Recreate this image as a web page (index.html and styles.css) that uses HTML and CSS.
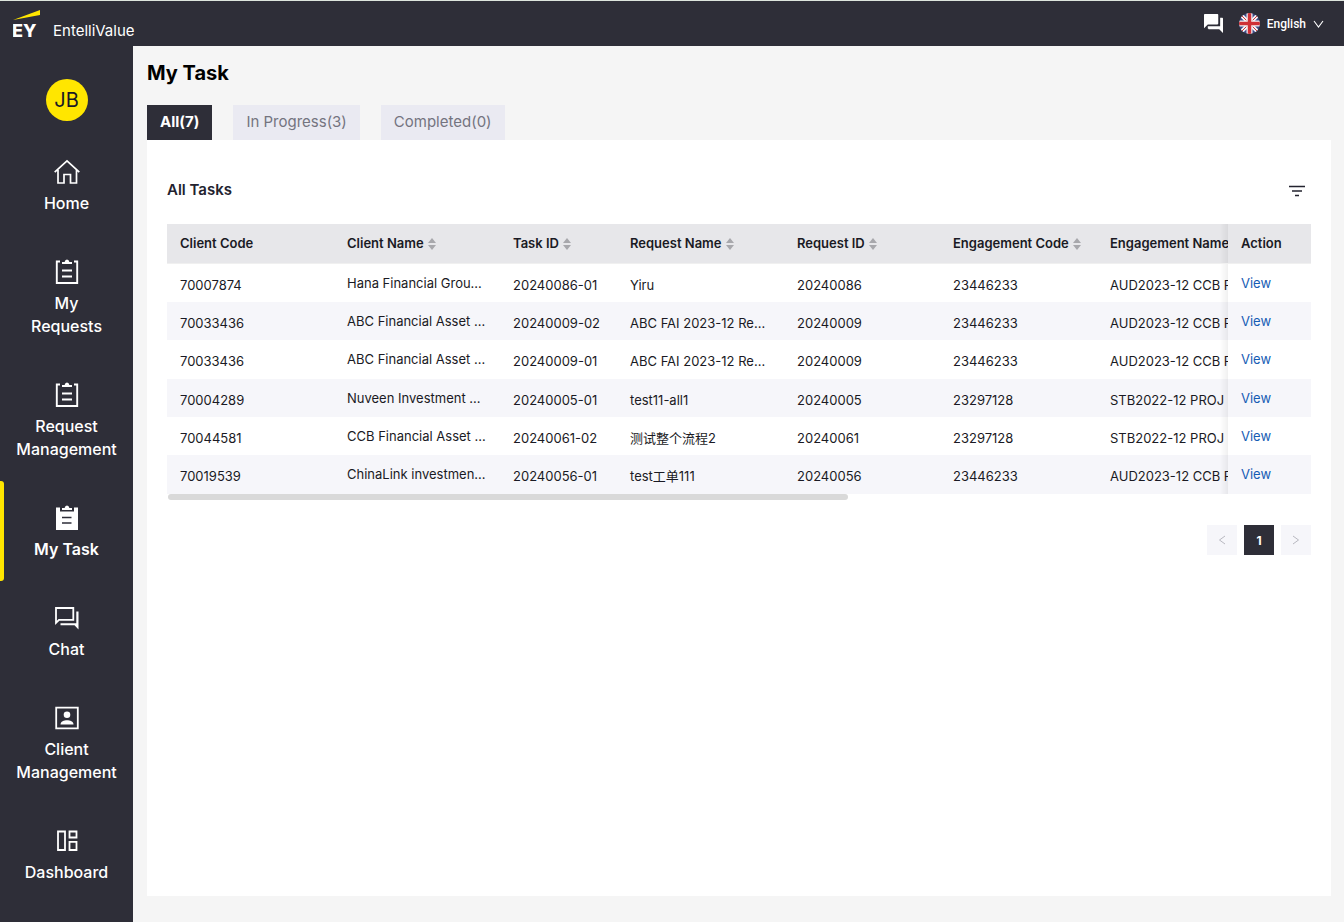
FILE: index.html
```html
<!DOCTYPE html>
<html lang="en">
<head>
<meta charset="utf-8">
<meta name="viewport" content="width=device-width, initial-scale=1">
<title>EntelliValue - My Task</title>
<link rel="stylesheet" href="styles.css">
</head>
<body>
<svg class="defs" aria-hidden="true">
  <symbol id="clipboard" viewBox="0 0 26 26">
    <path d="M6 2.500H2.800V24H23.200V2.500H20" fill="none" stroke="currentColor" stroke-width="1.900"/>
    <path d="M8 5V3h2.600Q11 .500 13 .500t2.400 2.500H18v2z" fill="currentColor"/>
    <path d="M8 11.500H18M8 17.500H18" stroke="currentColor" stroke-width="1.900"/>
  </symbol>
  <symbol id="sorter" viewBox="0 0 8 12">
    <path d="M4 0L8 5H0zM4 12L0 7H8z" fill="currentColor"/>
  </symbol>
</svg>
<header class="topbar">
  <a class="brand" href="#">
    <svg class="logo" viewBox="0 0 28 30" aria-hidden="true">
      <path d="M0 10L27 0V5z" fill="#ffe600"/>
      <text x="-1" y="27" class="logo-text">EY</text>
    </svg>
    <span class="brand-name">EntelliValue</span>
  </a>
  <div class="tools">
    <button class="plain" aria-label="Messages">
      <svg width="19" height="19" viewBox="2 2 20 20"><path d="M21 6h-2v9H6v2c0 .550.450 1 1 1h11l4 4V7c0-.550-.450-1-1-1zm-4 6V3c0-.550-.450-1-1-1H3c-.550 0-1 .450-1 1v14l4-4h10c.550 0 1-.450 1-1z" fill="#fff"/></svg>
    </button>
    <button class="plain language">
      <svg class="flag" width="21" height="21" viewBox="0 0 21 21" aria-hidden="true">
        <rect width="21" height="21" fill="#3d4a85"/>
        <path d="M0 0L21 21M21 0L0 21" stroke="#f2f2f5" stroke-width="4"/>
        <path d="M0 0L21 21M21 0L0 21" stroke="#cf3339" stroke-width="1"/>
        <path d="M10.500 0V21M0 10.500H21" stroke="#f2f2f5" stroke-width="6"/>
        <path d="M10.500 0V21M0 10.500H21" stroke="#cf2f35" stroke-width="3.500"/>
      </svg>
      <span>English</span>
      <svg width="11" height="8" viewBox="0 0 11 8" aria-hidden="true"><path d="M1 1L5.500 7L10 1" fill="none" stroke="#fff" stroke-width="1.100"/></svg>
    </button>
  </div>
</header>
<div class="body">
  <aside class="sidebar">
    <div class="avatar">JB</div>
    <nav class="nav">
      <a href="#" class="nav-item">
        <svg viewBox="0 0 26 26"><path d="M.700 13.200L13 1.800L25.300 13.200M4 11V24H10V15.500H16.500V24H22.500V11" fill="none" stroke="currentColor" stroke-width="1.700"/></svg>
        <span>Home</span>
      </a>
      <a href="#" class="nav-item"><svg><use href="#clipboard"/></svg><span>My Requests</span></a>
      <a href="#" class="nav-item"><svg><use href="#clipboard"/></svg><span>Request Management</span></a>
      <a href="#" class="nav-item active" aria-current="page">
        <svg viewBox="0 0 26 26"><path d="M2 2.500H6V6.500H20V2.500H24V25H2z" fill="currentColor"/><path d="M8 5V3h2.600Q11 .500 13 .500t2.400 2.500H18v2z" fill="currentColor"/><path d="M8 12.500H17.500M8 18H17.500" stroke="#2e2e38" stroke-width="1.500"/></svg>
        <span>My Task</span>
      </a>
      <a href="#" class="nav-item">
        <svg viewBox="0 0 26 26"><path d="M2 3H19.300V14.800H5L2 17.800z" fill="none" stroke="currentColor" stroke-width="1.800"/><path d="M22.300 6.500H24.500V24.500L20.500 20.300H6.500V18.200H22.300z" fill="currentColor"/></svg>
        <span>Chat</span>
      </a>
      <a href="#" class="nav-item">
        <svg viewBox="0 0 26 26"><path d="M2.200 2.700H23.800V23.300H2.200z" fill="none" stroke="currentColor" stroke-width="1.800"/><circle cx="13" cy="9.800" r="3.300" fill="currentColor"/><path d="M6.500 19.500C6.500 16.500 10 15.300 13 15.300S19.500 16.500 19.500 19.500z" fill="currentColor"/></svg>
        <span>Client Management</span>
      </a>
      <a href="#" class="nav-item">
        <svg viewBox="0 0 26 26"><path d="M4 3.500H11V22H4zM15.500 3.500H22.500V9.500H15.500zM15.500 13.800H22.500V22H15.500z" fill="none" stroke="currentColor" stroke-width="1.800"/></svg>
        <span>Dashboard</span>
      </a>
    </nav>
  </aside>
  <main class="main">
    <h1>My Task</h1>
    <div class="tabs" role="tablist">
      <button class="tab selected" role="tab" aria-selected="true">All(7)</button>
      <button class="tab" role="tab">In Progress(3)</button>
      <button class="tab" role="tab">Completed(0)</button>
    </div>
    <section class="panel">
      <div class="panel-head">
        <h2>All Tasks</h2>
        <button class="plain filter" aria-label="Filter">
          <svg width="16" height="12" viewBox="0 0 16 12"><path d="M0 1.500H16M3 6H13M6 10.500H10" stroke="#23232f" stroke-width="1.700"/></svg>
        </button>
      </div>
      <div class="scroller">
        <table>
          <colgroup><col class="c-code"><col class="c-name"><col class="c-task"><col class="c-code"><col class="c-id"><col class="c-eng"><col><col class="c-action"></colgroup>
          <thead>
            <tr>
              <th>Client Code</th>
              <th>Client Name<svg class="sort"><use href="#sorter"/></svg></th>
              <th>Task ID<svg class="sort"><use href="#sorter"/></svg></th>
              <th>Request Name<svg class="sort"><use href="#sorter"/></svg></th>
              <th>Request ID<svg class="sort"><use href="#sorter"/></svg></th>
              <th>Engagement Code<svg class="sort"><use href="#sorter"/></svg></th>
              <th>Engagement Name</th>
              <th class="action">Action</th>
            </tr>
          </thead>
          <tbody>
            <tr><td>70007874</td><td class="client">Hana Financial Grou...</td><td>20240086-01</td><td>Yiru</td><td>20240086</td><td>23446233</td><td>AUD2023-12 CCB F</td><td class="action"><a href="#">View</a></td></tr>
            <tr><td>70033436</td><td class="client">ABC Financial Asset ...</td><td>20240009-02</td><td>ABC FAI 2023-12 Re...</td><td>20240009</td><td>23446233</td><td>AUD2023-12 CCB F</td><td class="action"><a href="#">View</a></td></tr>
            <tr><td>70033436</td><td class="client">ABC Financial Asset ...</td><td>20240009-01</td><td>ABC FAI 2023-12 Re...</td><td>20240009</td><td>23446233</td><td>AUD2023-12 CCB F</td><td class="action"><a href="#">View</a></td></tr>
            <tr><td>70004289</td><td class="client">Nuveen Investment ...</td><td>20240005-01</td><td>test11-all1</td><td>20240005</td><td>23297128</td><td>STB2022-12 PROJ</td><td class="action"><a href="#">View</a></td></tr>
            <tr><td>70044581</td><td class="client">CCB Financial Asset ...</td><td>20240061-02</td><td>测试整个流程2</td><td>20240061</td><td>23297128</td><td>STB2022-12 PROJ</td><td class="action"><a href="#">View</a></td></tr>
            <tr><td>70019539</td><td class="client">ChinaLink investmen...</td><td>20240056-01</td><td>test工单111</td><td>20240056</td><td>23446233</td><td>AUD2023-12 CCB F</td><td class="action"><a href="#">View</a></td></tr>
          </tbody>
        </table>
      </div>
      <div class="track"><div class="thumb"></div></div>
      <div class="pager">
        <button class="page" disabled aria-label="Previous page"><svg width="8" height="10" viewBox="0 0 8 10"><path d="M7 1L1.500 5L7 9" fill="none" stroke="currentColor"/></svg></button>
        <button class="page current">1</button>
        <button class="page" disabled aria-label="Next page"><svg width="8" height="10" viewBox="0 0 8 10"><path d="M1 1L6.500 5L1 9" fill="none" stroke="currentColor"/></svg></button>
      </div>
    </section>
  </main>
</div>
</body>
</html>
```
FILE: styles.css
```css
* { box-sizing: border-box; }
body {
  margin: 0;
  min-height: 100vh;
  display: flex;
  flex-direction: column;
  font-family: Inter, "Noto Sans CJK SC", sans-serif;
  font-size: 13px;
  color: #1a1a24;
  background: #f5f5f5;
}
h1, h2 { margin: 0; }
a { text-decoration: none; color: inherit; }
button { font: inherit; border: 0; padding: 0; cursor: pointer; }
.defs { display: none; }
.plain { display: flex; align-items: center; background: none; color: #fff; }

.topbar {
  display: flex;
  justify-content: space-between;
  height: 46px;
  padding: 0 20px 0 13px;
  background: #2e2e38;
  border-top: 1px solid #dde5dd;
  color: #fff;
}
.brand { display: flex; gap: 12px; padding-top: 9px; }
.logo { width: 28px; height: 30px; }
.logo-text { font-size: 18px; font-weight: 800; fill: #fff; }
.brand-name { font-size: 15px; line-height: 20px; padding-top: 11px; }
.tools { display: flex; align-items: center; gap: 16px; }
.language { gap: 7px; font-family: Roboto, sans-serif; font-size: 12px; font-weight: 500; }
.flag { border-radius: 50%; }

.body { flex: 1; display: flex; }
.sidebar { flex: none; width: 133px; background: #2e2e38; color: #fff; }
.avatar {
  width: 42px;
  height: 42px;
  margin: 33px auto 14px;
  border-radius: 50%;
  background: #ffe600;
  color: #1a1a24;
  font-size: 20px;
  line-height: 42px;
  text-align: center;
}
.nav-item {
  display: flex;
  flex-direction: column;
  align-items: center;
  gap: 7px;
  padding: 24px 14px 20px;
  border-left: 4px solid transparent;
  border-right: 4px solid transparent;
  font-size: 16px;
  font-weight: 500;
  line-height: 23px;
  text-align: center;
}
.nav-item svg { width: 26px; height: 26px; }
.nav-item.active { font-weight: 600; position: relative; }
.nav-item.active::before {
  content: "";
  position: absolute;
  inset: 0 auto 0 -4px;
  width: 4px;
  border-radius: 0 3px 3px 0;
  background: #ffe600;
}

.main { flex: 1; min-width: 0; display: flex; flex-direction: column; padding: 13px 13px 26px 14px; }
h1 { font-size: 20px; line-height: 28px; color: #000; }
.tabs { display: flex; gap: 21px; margin-top: 18px; }
.tab {
  height: 35px;
  padding: 0 13px 2px;
  background: #eaeaf2;
  color: #747480;
  font-size: 15px;
}
.tab.selected { background: #2e2e38; color: #fff; font-weight: 700; }
.panel { flex: 1; background: #fff; padding: 38px 20px 20px; }
.panel-head { display: flex; justify-content: space-between; align-items: center; height: 26px; }
h2 { font-size: 15px; line-height: 18px; padding-bottom: 2px; font-weight: 600; color: #23232f; }
.filter { margin-right: 6px; }

.scroller { margin-top: 20px; overflow-x: auto; scrollbar-width: none; }
table { width: 168%; min-width: 1080px; table-layout: fixed; border-collapse: separate; border-spacing: 0; }
.c-code { width: 167px; }
.c-name { width: 166px; }
.c-task { width: 117px; }
.c-id { width: 156px; }
.c-eng { width: 157px; }
.c-action { width: 83px; }
th, td { text-align: left; white-space: nowrap; padding: 3px 0 0 13px; }
th {
  height: 40px;
  padding: 0 0 2px 13px;
  background: #e7e7ea;
  border-bottom: 1px solid #f0f0f0;
  font-size: 13px;
  font-weight: 600;
}
td { height: 38px; background: #fff; line-height: 20px; }
tr:nth-child(3n) td { height: 39px; }
tr:nth-child(even) td { background: #f6f6fa; }
td.client { padding: 0 0 1px 13px; }
.sort { width: 8px; height: 12px; margin-left: 4px; color: #a8a8ac; vertical-align: -2px; }
.action { position: sticky; right: 0; }
.action::before {
  content: "";
  position: absolute;
  top: 0;
  bottom: 0;
  right: 100%;
  width: 8px;
  background: linear-gradient(to left, rgba(0, 0, 0, 0.06), transparent);
}
td.action { padding: 0 0 1px 13px; color: #155cb4; }
.track { height: 6px; padding: 0 1px; }
.thumb { width: calc(100% / 1.68); height: 6px; border-radius: 3px; background: #d9d9d9; }

.pager { display: flex; justify-content: flex-end; gap: 7px; margin-top: 25px; }
.page { width: 30px; height: 30px; background: #f6f6fa; color: #b8b8c0; font-size: 12px; }
.page.current { background: #2e2e38; color: #fff; font-weight: 700; }
```
